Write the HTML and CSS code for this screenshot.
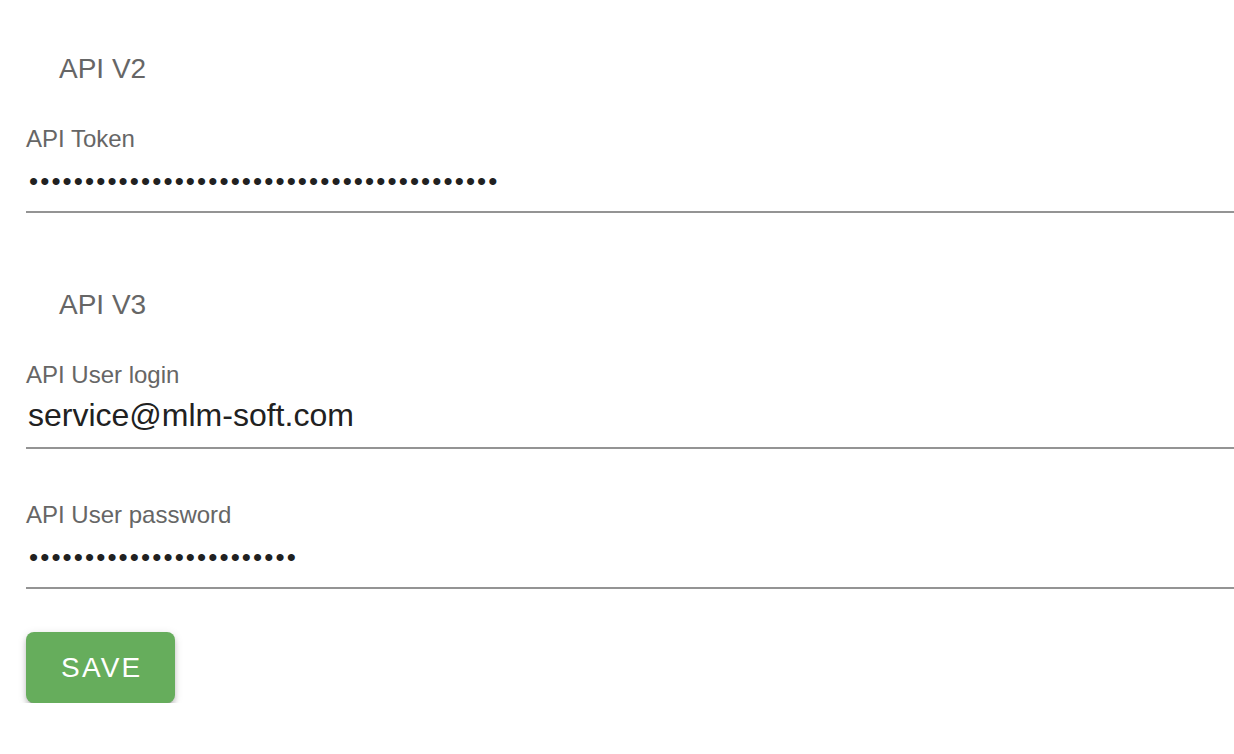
FILE: index.html
```html
<!DOCTYPE html>
<html lang="en">
<head>
<meta charset="utf-8">
<title>API settings</title>
<link rel="stylesheet" href="styles.css">
</head>
<body>
<form class="settings">
  <section class="group group-v2">
    <h2 class="group-title">API V2</h2>
    <div class="field">
      <label class="field-label" for="token">API Token</label>
      <input class="field-input field-secret" id="token" type="password" value="abcdefghijabcdefghijabcdefghijabcdefghij12">
    </div>
  </section>
  <section class="group group-v3">
    <h2 class="group-title">API V3</h2>
    <div class="field">
      <label class="field-label" for="login">API User login</label>
      <input class="field-input" id="login" type="text" value="service@mlm-soft.com">
    </div>
    <div class="field field-next">
      <label class="field-label" for="pass">API User password</label>
      <input class="field-input field-secret" id="pass" type="password" value="abcdefghijabcdefghijabcd">
    </div>
  </section>
  <div class="actions">
    <button class="save-btn" type="button">Save</button>
  </div>
</form>
</body>
</html>
```
FILE: styles.css
```css
html, body {
  margin: 0;
  padding: 0;
  background: #ffffff;
}

body {
  font-family: "Liberation Sans", Arial, Helvetica, sans-serif;
}

.settings {
  padding: 53px 0 0 26px;
  display: flex;
  flex-direction: column;
}

.group {
  display: flex;
  flex-direction: column;
}

.group-v3 {
  margin-top: 76px;
}

.group-title {
  margin: 0 0 40px 33px;
  font-size: 28px;
  line-height: 32px;
  font-weight: 400;
  color: #666666;
}

.field {
  display: flex;
  flex-direction: column;
}

.field-next {
  margin-top: 52px;
}

.field-label {
  font-size: 24px;
  line-height: 28px;
  color: #666666;
}

.field-input {
  box-sizing: content-box;
  display: block;
  width: 100%;
  height: 38px;
  margin: 0;
  padding: 7px 0 13px 2px;
  border: none;
  border-bottom: 2px solid #949494;
  border-radius: 0;
  outline: none;
  background: transparent;
  font-family: "Liberation Sans", Arial, Helvetica, sans-serif;
  font-size: 32px;
  line-height: 38px;
  color: #212121;
}

.field-secret {
  font-size: 26px;
  letter-spacing: 2.1px;
  padding: 9px 0 11px 3px;
}

.actions {
  margin-top: 43px;
  display: flex;
}

.save-btn {
  box-sizing: border-box;
  height: 71px;
  padding: 0 33px 0 35px;
  border: none;
  border-radius: 8px;
  background: #66ad5c;
  color: #ffffff;
  font-family: "Liberation Sans", Arial, Helvetica, sans-serif;
  font-size: 28px;
  font-weight: 400;
  letter-spacing: 2.2px;
  text-transform: uppercase;
  box-shadow: 0 6px 2px -4px rgba(0, 0, 0, 0.25), 0 4px 5px 0 rgba(0, 0, 0, 0.18), 0 2px 10px 0 rgba(0, 0, 0, 0.12);
  cursor: pointer;
}
```
